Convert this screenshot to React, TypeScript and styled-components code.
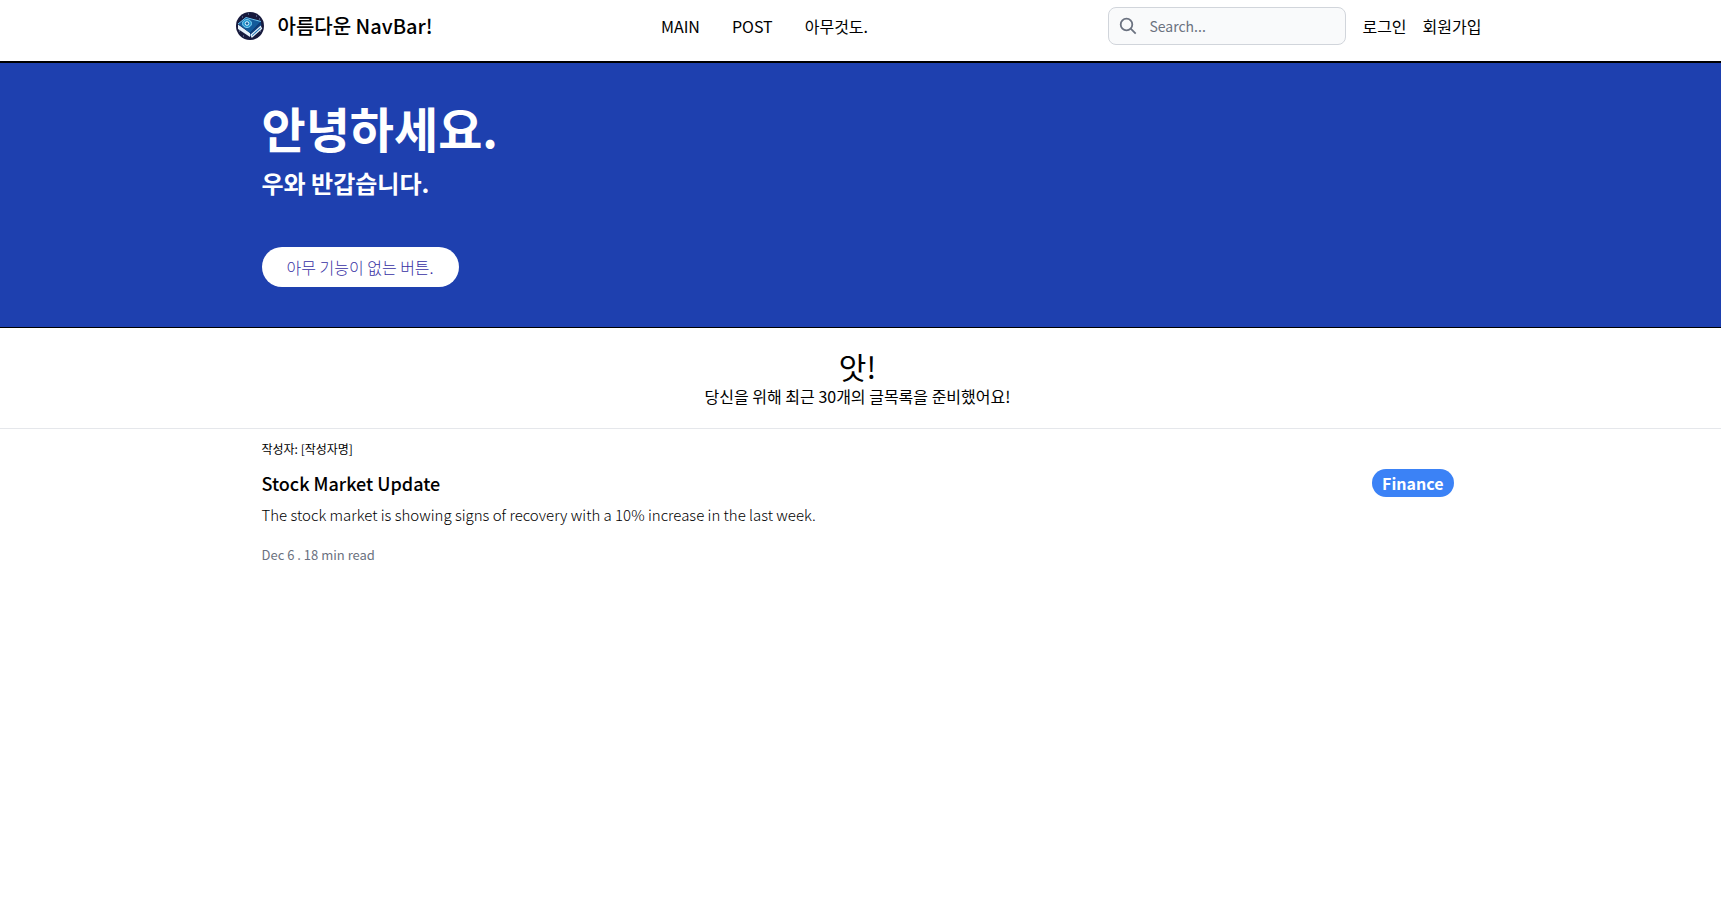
import React from 'react';
import styled, { createGlobalStyle } from 'styled-components';

const GlobalStyle = createGlobalStyle`
  *, *::before, *::after { box-sizing: border-box; }
  body {
    margin: 0;
    background: #fff;
    color: #000;
    font: 400 16px/24px "Noto Sans CJK KR", "Noto Sans", sans-serif;
  }
  h1, h2, h3, p, ul { margin: 0; padding: 0; }
  a { color: inherit; text-decoration: none; }
`;

const Container = styled.div<{ $inset: number }>`
  width: 100%;
  max-width: 1280px;
  margin: 0 auto;
  padding: 0 ${(p) => p.$inset}px;
`;

const Header = styled.header`
  padding: 7px 6px 16px 0;
  border-bottom: 2px solid #000;
`;

const NavRow = styled(Container).attrs({ as: 'nav' })`
  display: flex;
  align-items: center;
  justify-content: space-between;
`;

const Brand = styled.a`
  display: flex;
  align-items: center;
  gap: 12px;
  font-size: 20px;
  line-height: 28px;
  font-weight: 500;
`;

const NavList = styled.ul`
  display: flex;
  gap: 32px;
  padding-right: 12px;
  list-style: none;
`;

const NavActions = styled.div`
  display: flex;
  align-items: center;
  gap: 16px;
`;

const SearchBox = styled.label`
  display: flex;
  align-items: center;
  gap: 12px;
  width: 238px;
  height: 38px;
  padding: 0 10px;
  border: 1px solid #d1d5db;
  border-radius: 8px;
  background: #f9fafb;
`;

const SearchInput = styled.input`
  flex: 1;
  min-width: 0;
  padding: 0;
  border: 0;
  outline: 0;
  background: transparent;
  font: inherit;
  font-size: 14px;
  line-height: 20px;
  &::placeholder { color: #6b7280; opacity: 1; }
`;

const Hero = styled.section`
  padding: 40px 6px 40px 0;
  border-bottom: 1px solid #000;
  background: #1e40af;
  color: #fff;
`;

const HeroTitle = styled.h1`
  margin-bottom: 16px;
  font-size: 48px;
  line-height: 48px;
  font-weight: 700;
`;

const HeroSubtitle = styled.h2`
  margin-bottom: 48px;
  font-size: 24px;
  line-height: 32px;
  font-weight: 700;
`;

const PillButton = styled.button`
  display: block;
  padding: 8px 25px;
  border: 0;
  border-radius: 20px;
  background: #fff;
  color: #3730a3;
  font: inherit;
  font-weight: 300;
`;

const Intro = styled.section`
  padding: 20px 6px 20px 0;
  border-bottom: 1px solid #e5e7eb;
  text-align: center;
`;

const IntroTitle = styled.h2`
  font-size: 30px;
  line-height: 36px;
  font-weight: 400;
`;

const Posts = styled.main`
  padding: 12px 6px 12px 0;
`;

const Author = styled.p`
  margin-bottom: 12px;
  font-size: 12px;
  line-height: 16px;
`;

const PostRow = styled.div`
  display: flex;
  align-items: center;
  justify-content: space-between;
`;

const PostTitle = styled.h3`
  font-size: 18px;
  line-height: 28px;
  font-weight: 500;
`;

const Tag = styled.span`
  padding: 2px 10px;
  border-radius: 14px;
  background: #3b82f6;
  color: #fff;
  font-weight: 700;
`;

const Summary = styled.p`
  margin: 8px 0 20px;
  font-size: 15px;
  line-height: 20px;
  font-weight: 300;
`;

const Meta = styled.p`
  color: #6b7280;
  font-size: 13px;
  line-height: 20px;
`;

const Logo = () => (
  <svg width="32" height="32" viewBox="0 0 32 32" aria-hidden="true">
    <circle cx="16" cy="16" r="14" fill="#171a3d" />
    <path d="M8 7h1M22 6h1M25 9h1M5 21h1M9 26h1M14 4h1M26 21h1" stroke="#8896bd" />
    <path d="M4 14.5 16 23v4L4 19z" fill="#e6f1fa" />
    <path d="M4 14 12 7.5l15 4-11 11.5z" fill="#135b9b" />
    <path d="m4 14 8-6.5 15 4" fill="none" stroke="#6ec6f2" />
    <path d="m16 23 11-11.5.5 4L16 27z" fill="#0d3f7c" />
    <path d="m17 25 9.5-8.5 1 2-9.5 8.5z" fill="#1d75b8" stroke="#e6f1fa" strokeWidth="1.2" />
    <ellipse cx="13" cy="13.5" rx="4.5" ry="4" fill="#2497d0" stroke="#7fd0f2" />
    <circle cx="13" cy="13.5" r="1.8" fill="#135b9b" stroke="#d9f6ff" />
  </svg>
);

const SearchIcon = () => (
  <svg width="18" height="18" viewBox="0 0 18 18" fill="none" stroke="#6b7280" strokeWidth="1.8" aria-hidden="true">
    <circle cx="7.5" cy="7.5" r="5.8" />
    <path d="m11.7 11.7 5 5" />
  </svg>
);

export default function App() {
  return (
    <>
      <GlobalStyle />
      <Header>
        <NavRow $inset={16}>
          <Brand href="#"><Logo />아름다운 NavBar!</Brand>
          <NavList>
            <li><a href="#main">MAIN</a></li>
            <li><a href="#post">POST</a></li>
            <li><a href="#any">아무것도.</a></li>
          </NavList>
          <NavActions>
            <SearchBox>
              <SearchIcon />
              <SearchInput type="text" placeholder="Search..." aria-label="Search" />
            </SearchBox>
            <a href="#login">로그인</a>
            <a href="#signup">회원가입</a>
          </NavActions>
        </NavRow>
      </Header>
      <Hero>
        <Container $inset={44}>
          <HeroTitle>안녕하세요.</HeroTitle>
          <HeroSubtitle>우와 반갑습니다.</HeroSubtitle>
          <PillButton type="button">아무 기능이 없는 버튼.</PillButton>
        </Container>
      </Hero>
      <Intro>
        <IntroTitle>앗!</IntroTitle>
        <p>당신을 위해 최근 30개의 글목록을 준비했어요!</p>
      </Intro>
      <Posts>
        <Container as="article" $inset={44}>
          <Author>작성자: [작성자명]</Author>
          <PostRow>
            <PostTitle>Stock Market Update</PostTitle>
            <Tag>Finance</Tag>
          </PostRow>
          <Summary>The stock market is showing signs of recovery with a 10% increase in the last week.</Summary>
          <Meta>Dec 6 . 18 min read</Meta>
        </Container>
      </Posts>
    </>
  );
}
